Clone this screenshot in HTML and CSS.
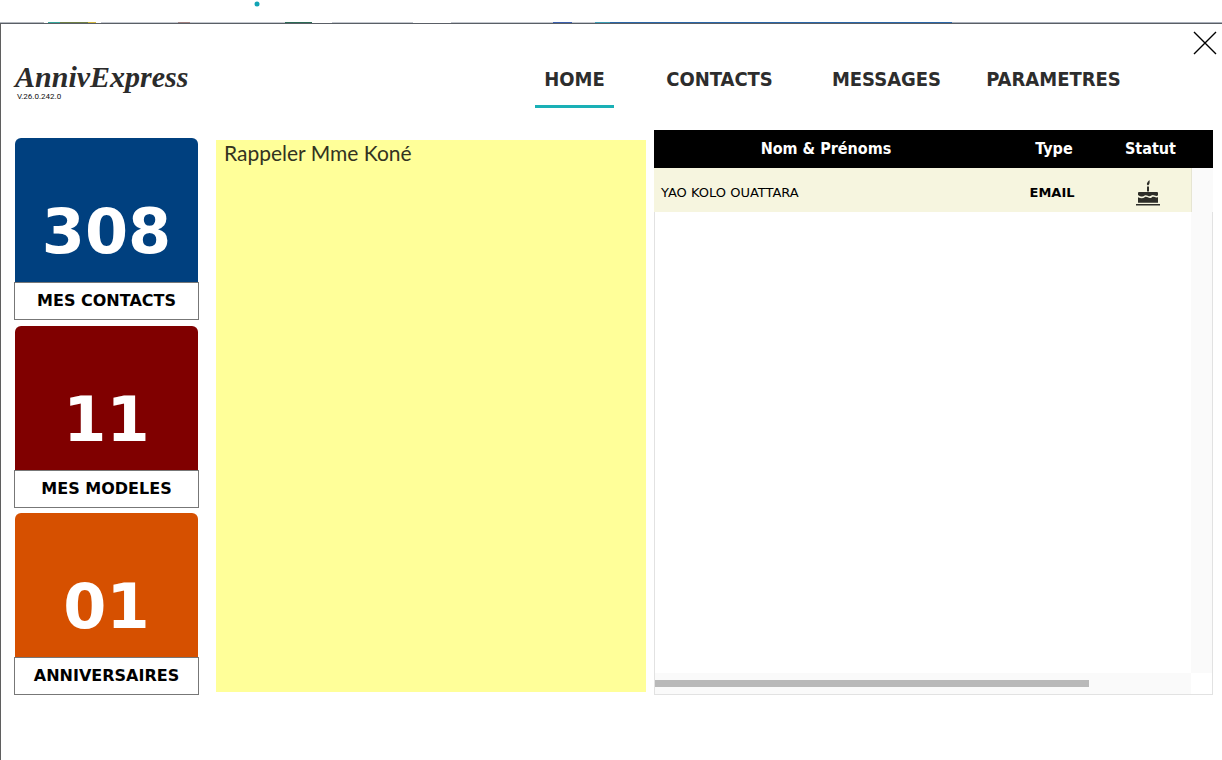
FILE: index.html
```html
<!DOCTYPE html>
<html lang="fr">
<head>
<meta charset="utf-8">
<title>AnnivExpress</title>
<link rel="stylesheet" href="styles.css">
</head>
<body>
<div class="desktop">
  <svg class="desktop-dot" viewBox="0 0 6 6" aria-hidden="true"><circle cx="3" cy="3" r="2.5" fill="#11a3b4"/></svg>
</div>
<div class="window">
  <button class="close" type="button" aria-label="Fermer">
    <svg viewBox="0 0 24 24" aria-hidden="true"><path d="M1 1L23 23M23 1L1 23" stroke="#000" stroke-width="1.4" fill="none"/></svg>
  </button>
  <header class="header">
    <div class="brand">
      <h1 class="logo">AnnivExpress</h1>
      <p class="version">V.26.0.242.0</p>
    </div>
    <nav class="nav">
      <a class="nav-link active" href="#home">HOME</a>
      <a class="nav-link" href="#contacts">CONTACTS</a>
      <a class="nav-link" href="#messages">MESSAGES</a>
      <a class="nav-link" href="#parametres">PARAMETRES</a>
    </nav>
  </header>
  <main class="main">
    <section class="cards">
      <article class="card blue"><p class="count">308</p><h2 class="label">MES CONTACTS</h2></article>
      <article class="card red"><p class="count">11</p><h2 class="label">MES MODELES</h2></article>
      <article class="card orange"><p class="count">01</p><h2 class="label">ANNIVERSAIRES</h2></article>
    </section>
    <textarea class="note" aria-label="Notes" spellcheck="false">Rappeler Mme Koné</textarea>
    <section class="list">
      <table class="table">
        <thead>
          <tr><th class="col-name">Nom &amp; Prénoms</th><th class="col-type">Type</th><th class="col-status">Statut</th><th class="col-track"></th></tr>
        </thead>
        <tbody>
          <tr>
            <td class="name">YAO KOLO OUATTARA</td>
            <td class="type">EMAIL</td>
            <td class="status">
              <svg class="cake" viewBox="0 0 24 26" role="img" aria-label="Anniversaire">
                <path d="M13.4 0C14 2.4 13.6 4.6 12 5.4C10 4.6 10.8 2.6 13.4 0Z" fill="#2d2d28"/>
                <path d="M11 6.500H13V11.500H11Z" fill="#2d2d28"/>
                <path d="M3 12H21Q22 12 22 13V15.200C20 17.400 17.500 13.600 15.300 15.600C13 17.800 11 14 8.700 15.600C6.500 17.400 4.500 16.500 2 15V13Q2 12 3 12Z" fill="#2d2d28"/>
                <path d="M2 17.300C5 18.700 7 18.600 9 17C11 15.800 13 19.300 15.700 17.400C17.700 15.700 19.500 18.600 22 17V22.800H2Z" fill="#2d2d28"/>
                <path d="M0 24H24V25.500H0Z" fill="#2d2d28"/>
              </svg>
            </td>
            <td class="track"></td>
          </tr>
        </tbody>
      </table>
      <div class="list-body"><div class="track track-v"></div></div>
      <div class="list-foot"><div class="track track-h"><div class="thumb"></div></div></div>
    </section>
  </main>
</div>
</body>
</html>
```
FILE: styles.css
```css
* { box-sizing: border-box; }
body {
  margin: 0;
  min-height: 100vh;
  display: flex;
  flex-direction: column;
  background: #fff;
  font-family: "DejaVu Sans Condensed", "DejaVu Sans", Tahoma, sans-serif;
}
h1, h2, p { margin: 0; }

.desktop {
  height: 23px;
  padding: 1px 0 0 254px;
  background: linear-gradient(90deg,
    #b4b8be 0 44px, #fff 44px 48px, #35a79b 48px 60px, #6f7f45 60px 88px, #d3b63c 88px 96px,
    #fff 96px 101px, #c3c7ce 101px 178px, #a08080 178px 190px, #c3c7ce 190px 285px,
    #2b6a55 285px 312px, #fff 312px 332px, #c3c7ce 332px 413px, #fff 413px 451px,
    #c3c7ce 451px 553px, #3b5fae 553px 572px, #c3c7ce 572px 595px, #3a9cb5 595px 610px,
    #2b67a8 610px 952px, #a9afba 952px) bottom / 100% 1px no-repeat;
}
.desktop-dot { display: block; width: 6px; height: 6px; }

.window {
  position: relative;
  flex: 1;
  border-top: 1px solid #5a5f66;
  border-left: 1px solid #5f5f5f;
}
.close {
  position: absolute;
  top: 7px;
  right: 5px;
  width: 24px;
  height: 24px;
  padding: 0;
  border: 0;
  background: none;
}
.close svg { display: block; width: 24px; height: 24px; }

.header {
  display: flex;
  justify-content: space-between;
  height: 106px;
  padding: 37px 85px 0 14px;
}
.logo {
  font: italic bold 30px/32px "Brush Script MT", "Liberation Serif", serif;
  color: #2b2b2b;
}
.version {
  padding-left: 2px;
  font: 8px/8px Roboto, Arial, sans-serif;
  color: #111;
}
.nav { display: flex; align-items: flex-start; }
.nav-link {
  width: 167px;
  height: 47px;
  font-size: 20px;
  line-height: 36px;
  font-weight: bold;
  text-align: center;
  text-decoration: none;
  color: #2d2d2d;
}
.nav-link.active {
  width: 79px;
  margin-right: 22px;
  border-bottom: 3px solid #1ab0b6;
}

.main {
  display: grid;
  grid-template-columns: 185px 455fr 559fr;
  padding: 0 9px 0 13px;
  min-height: 565px;
}
.cards {
  display: flex;
  flex-direction: column;
  justify-content: space-between;
  padding-top: 8px;
}
.count {
  height: 144px;
  margin: 0 1px;
  padding-top: 58px;
  border-radius: 6px 6px 0 0;
  font: bold 62px/72px "DejaVu Sans", Verdana, sans-serif;
  text-align: center;
  color: #fff;
}
.blue .count { background: #00407f; }
.red .count { background: #800000; }
.orange .count { background: #d65000; }
.label {
  height: 38px;
  border: 1px solid #777;
  background: #fff;
  font: bold 16px/36px "DejaVu Sans", Verdana, sans-serif;
  text-align: center;
  color: #000;
}

.note {
  margin: 10px 8px 3px 17px;
  padding: 0 8px;
  border: 0;
  outline: 0;
  resize: none;
  background: #ffff99;
  font: 21px/26px Lato, sans-serif;
  color: #33331f;
}

.list {
  display: flex;
  flex-direction: column;
  border: 1px solid #e2e2e2;
  border-top: 0;
}
.table {
  width: calc(100% + 2px);
  margin: 0 -1px;
  table-layout: fixed;
  border-collapse: collapse;
}
.table th {
  height: 38px;
  padding: 0 0 2px;
  background: #000;
  color: #fff;
  font-size: 16px;
}
.col-type { width: 112px; }
.col-status { width: 81px; }
.col-track { width: 22px; }
.table td { height: 44px; padding: 0; background: #f6f5df; color: #000; }
.table td.name {
  padding: 4px 0 0 7px;
  font: 13px "DejaVu Sans", Verdana, sans-serif;
}
.table td.type {
  padding: 4px 4px 0 0;
  font: bold 13px "DejaVu Sans", Verdana, sans-serif;
  text-align: center;
}
.table td.status { padding: 6px 4px 0 0; border-right: 1px solid #e6e5d2; text-align: center; }
.cake { display: inline-block; vertical-align: middle; width: 24px; height: 26px; }
.track, .table td.track { background: #fafafa; }
.list-body { flex: 1; display: flex; justify-content: flex-end; }
.track-v { width: 21px; }
.list-foot { padding-right: 21px; }
.track-h { height: 21px; padding: 7px 0; }
.thumb { width: 81%; height: 7px; background: #b9b9b9; }
```
